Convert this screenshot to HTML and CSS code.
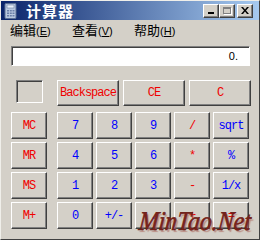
FILE: index.html
```html
<!DOCTYPE html>
<html lang="zh-CN">
<head>
    <meta charset="UTF-8">
    <title>计算器</title>
    <link rel="stylesheet" href="styles.css">
</head>
<body>
    <div class="window">
        <div class="titlebar">
            <svg class="app-icon" width="16" height="16" viewBox="0 0 16 16">
                <rect x="2" y="0.5" width="11" height="15" rx="1" fill="#b9c9e0" stroke="#5a6f94"/>
                <rect x="4" y="2" width="7" height="3" fill="#e8f0fa" stroke="#6c7fa0" stroke-width="0.6"/>
                <g fill="#6a7fa8">
                    <rect x="4" y="7" width="2" height="1.5"/><rect x="6.8" y="7" width="2" height="1.5"/><rect x="9.5" y="7" width="2" height="1.5"/>
                    <rect x="4" y="9.5" width="2" height="1.5"/><rect x="6.8" y="9.5" width="2" height="1.5"/><rect x="9.5" y="9.5" width="2" height="1.5"/>
                    <rect x="4" y="12" width="2" height="1.5"/><rect x="6.8" y="12" width="2" height="1.5"/><rect x="9.5" y="12" width="2" height="1.5"/>
                </g>
            </svg>
            <span class="title">计算器</span>
            <div class="controls">
                <span class="ctl ctl-min"><i></i></span>
                <span class="ctl ctl-max"><i></i></span>
                <span class="ctl ctl-close">
                    <svg width="8" height="7" viewBox="0 0 8 7"><path d="M0 0h2l2 2.5 2-2.5h2l-3 3.5 3 3.5h-2l-2-2.5-2 2.5h-2l3-3.5z" fill="#000"/></svg>
                </span>
            </div>
        </div>

        <div class="menubar">
            <span class="menu-item">编辑<small>(<u>E</u>)</small></span>
            <span class="menu-item">查看<small>(<u>V</u>)</small></span>
            <span class="menu-item">帮助<small>(<u>H</u>)</small></span>
        </div>

        <div class="display">0.</div>

        <div class="keypad">
            <div class="mem-col">
                <div class="mem-slot"><div class="mem-box"></div></div>
                <button class="key red">MC</button>
                <button class="key red">MR</button>
                <button class="key red">MS</button>
                <button class="key red">M+</button>
            </div>
            <div class="main-col">
                <div class="top-row">
                    <button class="key wide red">Backspace</button>
                    <button class="key wide red">CE</button>
                    <button class="key wide red">C</button>
                </div>
                <div class="num-grid">
                    <button class="key blue">7</button>
                    <button class="key blue">8</button>
                    <button class="key blue">9</button>
                    <button class="key red">/</button>
                    <button class="key blue">sqrt</button>

                    <button class="key blue">4</button>
                    <button class="key blue">5</button>
                    <button class="key blue">6</button>
                    <button class="key red">*</button>
                    <button class="key blue">%</button>

                    <button class="key blue">1</button>
                    <button class="key blue">2</button>
                    <button class="key blue">3</button>
                    <button class="key red">-</button>
                    <button class="key blue">1/x</button>

                    <button class="key blue">0</button>
                    <button class="key blue">+/-</button>
                    <button class="key blue">.</button>
                    <button class="key red">+</button>
                    <button class="key red">=</button>
                </div>
            </div>
        </div>

        <div class="watermark">MinTao.Net</div>
    </div>
</body>
</html>
```

FILE: styles.css
```css
:root {
    --face: #d4d0c8;
    --light: #ffffff;
    --shadow: #808080;
    --dark: #404040;
    --red: #f00000;
    --blue: #0000ff;
}

body {
    margin: 0;
    background: var(--face);
    font-family: "Liberation Sans", "Noto Sans CJK SC", sans-serif;
}

.window {
    position: relative;
    width: 260px;
    height: 240px;
    box-sizing: border-box;
    background: var(--face);
    border-top: 1px solid #f0efea;
    border-left: 1px solid #f0efea;
    border-right: 1px solid var(--dark);
    border-bottom: 1px solid var(--dark);
    overflow: hidden;
}

/* title bar */
.titlebar {
    height: 19px;
    display: flex;
    align-items: center;
    padding-left: 2px;
    background: linear-gradient(to right, #0a246a, #a6caf0);
}

.app-icon {
    flex: none;
}

.title {
    margin-left: 7px;
    color: #fff;
    font-family: "Noto Sans CJK SC", sans-serif;
    font-weight: bold;
    font-size: 15px;
    line-height: 19px;
    letter-spacing: 1px;
}

.controls {
    margin-left: auto;
    margin-right: 6px;
    display: flex;
    align-items: center;
}

.ctl {
    width: 16px;
    height: 14px;
    box-sizing: border-box;
    background: var(--face);
    border-top: 1px solid var(--light);
    border-left: 1px solid var(--light);
    border-right: 1px solid var(--dark);
    border-bottom: 1px solid var(--dark);
    box-shadow: inset -1px -1px 0 var(--shadow);
    display: flex;
    align-items: center;
    justify-content: center;
    position: relative;
}

.ctl-min i {
    position: absolute;
    left: 4px;
    bottom: 3px;
    width: 6px;
    height: 2px;
    background: #000;
}

.ctl-max i {
    width: 8px;
    height: 7px;
    box-sizing: border-box;
    border: 1px solid var(--shadow);
    border-top-width: 2px;
    box-shadow: 1px 1px 0 var(--light);
}

.ctl-close {
    margin-left: 2px;
}

/* menu */
.menubar {
    height: 20px;
    display: flex;
    align-items: center;
    padding-left: 9px;
    font-family: "Noto Sans CJK SC", sans-serif;
    font-size: 13px;
    color: #000;
}

.menu-item {
    width: 62px;
    line-height: 20px;
}

.menu-item small {
    font-family: "Liberation Sans", sans-serif;
    font-size: 11px;
}

/* display */
.display {
    margin: 6px 9px 0 10px;
    height: 20px;
    box-sizing: border-box;
    background: #fff;
    border-top: 1px solid var(--shadow);
    border-left: 1px solid var(--shadow);
    border-right: 1px solid var(--light);
    border-bottom: 1px solid var(--light);
    box-shadow: inset 1px 1px 0 var(--dark);
    text-align: right;
    padding-right: 11px;
    font-size: 11px;
    line-height: 18px;
}

/* keys */
.keypad {
    display: flex;
    gap: 10px;
    padding: 14px 0 0 10px;
}

.mem-col {
    width: 36px;
    display: flex;
    flex-direction: column;
    gap: 3px;
}

.mem-slot {
    height: 26px;
    margin-bottom: 3px;
    display: flex;
    justify-content: center;
}

.mem-box {
    width: 27px;
    height: 23px;
    box-sizing: border-box;
    border-top: 1px solid var(--shadow);
    border-left: 1px solid var(--shadow);
    border-right: 1px solid var(--light);
    border-bottom: 1px solid var(--light);
    box-shadow: inset 1px 1px 0 var(--dark);
}

.main-col {
    display: flex;
    flex-direction: column;
    gap: 6px;
}

.top-row {
    display: flex;
    gap: 4px;
}

.num-grid {
    display: grid;
    grid-template-columns: repeat(5, 36px);
    grid-auto-rows: 27px;
    gap: 3px;
}

.key {
    width: 36px;
    height: 27px;
    box-sizing: border-box;
    margin: 0;
    padding: 0;
    background: var(--face);
    border-top: 1px solid var(--light);
    border-left: 1px solid var(--light);
    border-right: 1px solid var(--dark);
    border-bottom: 1px solid var(--dark);
    box-shadow: inset -1px -1px 0 var(--shadow);
    font-family: "Liberation Mono", monospace;
    font-size: 12px;
    letter-spacing: -1px;
}

.top-row .key {
    width: 62px;
    height: 26px;
}

.red {
    color: var(--red);
}

.blue {
    color: var(--blue);
}

/* watermark stamped over the bottom right */
.watermark {
    position: absolute;
    left: 138px;
    top: 205px;
    font-family: "Liberation Serif", serif;
    font-style: italic;
    font-size: 27px;
    line-height: 30px;
    color: #7d241c;
    -webkit-text-stroke: 0.6px #6a1a14;
    text-shadow: 2px 2px 1px rgba(170, 100, 90, 0.6);
    white-space: nowrap;
    transform: scaleX(0.88) skewX(-6deg);
    transform-origin: left center;
}
```
